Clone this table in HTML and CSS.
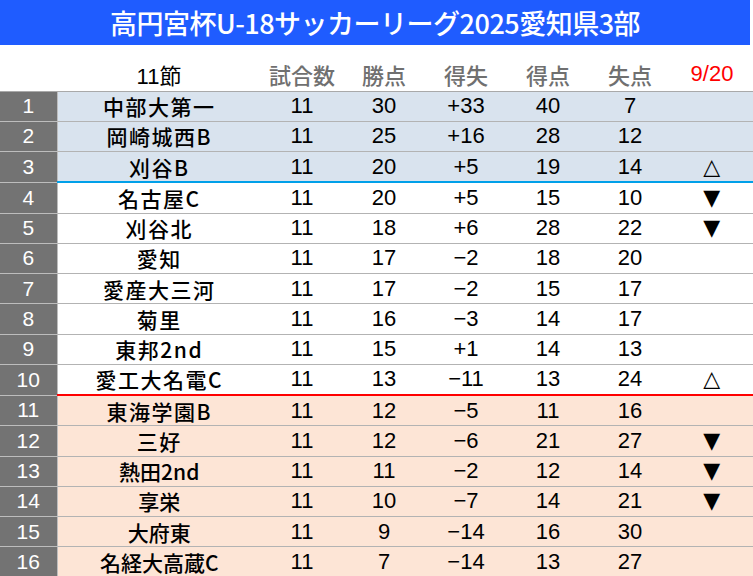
FILE: index.html
```html
<!DOCTYPE html>
<html lang="ja">
<head>
<meta charset="utf-8">
<link rel="stylesheet" href="styles.css">
</head>
<body>
<div class="page">
  <div class="title">高円宮杯U-18サッカーリーグ2025愛知県3部</div>
  <table class="standings">
    <thead>
      <tr class="head">
        <th class="rank-h"></th>
        <th class="name-h">11節</th>
        <th>試合数</th>
        <th>勝点</th>
        <th>得失</th>
        <th>得点</th>
        <th>失点</th>
        <th class="date">9/20</th>
      </tr>
    </thead>
    <tbody>
      <tr class="up"><td class="rank">1</td><td class="name">中部大第一</td><td>11</td><td>30</td><td>+33</td><td>40</td><td>7</td><td class="mark"></td></tr>
      <tr class="up"><td class="rank">2</td><td class="name">岡崎城西B</td><td>11</td><td>25</td><td>+16</td><td>28</td><td>12</td><td class="mark"></td></tr>
      <tr class="up line-blue"><td class="rank">3</td><td class="name">刈谷B</td><td>11</td><td>20</td><td>+5</td><td>19</td><td>14</td><td class="mark">△</td></tr>
      <tr><td class="rank">4</td><td class="name">名古屋C</td><td>11</td><td>20</td><td>+5</td><td>15</td><td>10</td><td class="mark">▼</td></tr>
      <tr><td class="rank">5</td><td class="name">刈谷北</td><td>11</td><td>18</td><td>+6</td><td>28</td><td>22</td><td class="mark">▼</td></tr>
      <tr><td class="rank">6</td><td class="name">愛知</td><td>11</td><td>17</td><td>−2</td><td>18</td><td>20</td><td class="mark"></td></tr>
      <tr><td class="rank">7</td><td class="name">愛産大三河</td><td>11</td><td>17</td><td>−2</td><td>15</td><td>17</td><td class="mark"></td></tr>
      <tr><td class="rank">8</td><td class="name">菊里</td><td>11</td><td>16</td><td>−3</td><td>14</td><td>17</td><td class="mark"></td></tr>
      <tr><td class="rank">9</td><td class="name">東邦2nd</td><td>11</td><td>15</td><td>+1</td><td>14</td><td>13</td><td class="mark"></td></tr>
      <tr class="line-red"><td class="rank">10</td><td class="name">愛工大名電C</td><td>11</td><td>13</td><td>−11</td><td>13</td><td>24</td><td class="mark">△</td></tr>
      <tr class="down"><td class="rank">11</td><td class="name">東海学園B</td><td>11</td><td>12</td><td>−5</td><td>11</td><td>16</td><td class="mark"></td></tr>
      <tr class="down"><td class="rank">12</td><td class="name">三好</td><td>11</td><td>12</td><td>−6</td><td>21</td><td>27</td><td class="mark">▼</td></tr>
      <tr class="down narrow"><td class="rank">13</td><td class="name">熱田2nd</td><td>11</td><td>11</td><td>−2</td><td>12</td><td>14</td><td class="mark">▼</td></tr>
      <tr class="down narrow"><td class="rank">14</td><td class="name">享栄</td><td>11</td><td>10</td><td>−7</td><td>14</td><td>21</td><td class="mark">▼</td></tr>
      <tr class="down narrow"><td class="rank">15</td><td class="name">大府東</td><td>11</td><td>9</td><td>−14</td><td>16</td><td>30</td><td class="mark"></td></tr>
      <tr class="down narrow"><td class="rank">16</td><td class="name">名経大高蔵C</td><td>11</td><td>7</td><td>−14</td><td>13</td><td>27</td><td class="mark"></td></tr>
    </tbody>
  </table>
</div>
</body>
</html>
```

FILE: styles.css
```css
html, body {
  margin: 0;
  padding: 0;
  background: #ffffff;
}

body {
  font-family: "Liberation Sans", "Noto Sans CJK JP", sans-serif;
  color: #000;
}

.page {
  width: 753px;
}

.title {
  width: 750px;
  height: 45px;
  background: #1f5cff;
  color: #ffffff;
  font-family: "Noto Sans CJK JP", sans-serif;
  font-weight: 500;
  font-size: 27px;
  line-height: 45px;
  text-align: center;
  letter-spacing: -0.5px;
}

.standings {
  border-collapse: collapse;
  table-layout: fixed;
  width: 753px;
}

.standings th,
.standings td {
  padding: 0;
  text-align: center;
  white-space: nowrap;
}

.head th {
  height: 46px;
  box-sizing: border-box;
  padding-top: 12px;
  font-family: "Noto Sans CJK JP", sans-serif;
  font-weight: 500;
  font-size: 22px;
  color: #707070;
  width: 82px;
  border-bottom: 1px solid #a9a9a9;
}

.head .rank-h { width: 57px; }
.head .name-h {
  width: 204px;
  color: #000;
  font-weight: normal;
  font-family: "Liberation Sans", "Noto Sans CJK JP", sans-serif;
}
.head .date {
  color: #ff0000;
  font-family: "Liberation Sans", sans-serif;
  font-weight: normal;
  font-size: 22px;
}

.standings td {
  height: 29.25px;
  font-size: 22px;
  line-height: 24px;
  border-bottom: 1px solid #b3b3b3;
}

.standings td:last-child {
  border-right: 1px solid #b3b3b3;
}

.standings td.rank {
  background: #737373;
  color: #ffffff;
  border-bottom: 1px solid #bdbdbd;
  border-right: 1px solid #bdbdbd;
  font-size: 21px;
}

.standings td.name {
  font-family: "Noto Sans CJK JP", sans-serif;
  font-weight: 500;
  font-size: 21px;
  letter-spacing: 1.5px;
}

.narrow td.name {
  letter-spacing: 0;
}

.standings td.mark {
  font-family: "DejaVu Sans", sans-serif;
  font-size: 22px;
}

.up td { background: #d9e3ee; }
.down td { background: #fde5d6; }

.line-blue td:not(.rank) { border-bottom: 2px solid #00a0e9; }
.line-red td:not(.rank) { border-bottom: 2px solid #ff0000; }
```
